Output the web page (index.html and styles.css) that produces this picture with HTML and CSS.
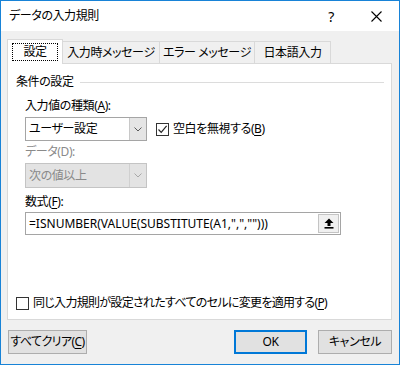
FILE: index.html
```html
<!doctype html>
<html lang="ja">
    <head>
        <meta charset="UTF-8" />
        <title>データの入力規則</title>
        <link rel="stylesheet" href="styles.css">
    </head>
    <body>
        <div class="dialog">
            <div class="titlebar">
                <span class="title">データの入力規則</span>
                <span class="help">?</span>
                <span class="close">
                    <svg width="11" height="11" viewBox="0 0 11 11">
                        <path d="M0.5 0.5 L10.5 10.5 M10.5 0.5 L0.5 10.5" stroke="#000" stroke-width="1.1" fill="none" />
                    </svg>
                </span>
            </div>

            <div class="content">
                <div class="tabs">
                    <div class="tab active"><span class="focus">設定</span></div>
                    <div class="tab tab-2">入力時メッセージ</div>
                    <div class="tab tab-3">エラー メッセージ</div>
                    <div class="tab tab-4">日本語入力</div>
                </div>

                <div class="panel">
                    <div class="group-head">
                        <span>条件の設定</span>
                        <span class="rule"></span>
                    </div>

                    <div class="fields">
                        <div class="label first">入力値の種類(<u>A</u>):</div>
                        <div class="row">
                            <div class="combo">
                                <span class="combo-text">ユーザー設定</span>
                                <span class="drop">
                                    <svg width="8" height="5" viewBox="0 0 8 5">
                                        <path d="M0.5 0.5 L4 4 L7.5 0.5" stroke="#5a5a5a" fill="none" />
                                    </svg>
                                </span>
                            </div>
                            <div class="check">
                                <span class="box">
                                    <svg width="11" height="11" viewBox="0 0 11 11">
                                        <path d="M1.5 5.5 L4.2 8.3 L9.6 1.8" stroke="#222" stroke-width="1.2" fill="none" />
                                    </svg>
                                </span>
                                <span>空白を無視する(<u>B</u>)</span>
                            </div>
                        </div>

                        <div class="label disabled">データ(D):</div>
                        <div class="combo combo-off">
                            <span class="combo-text">次の値以上</span>
                            <span class="drop">
                                <svg width="8" height="5" viewBox="0 0 8 5">
                                    <path d="M0.5 0.5 L4 4 L7.5 0.5" stroke="#a8a8a8" fill="none" />
                                </svg>
                            </span>
                        </div>

                        <div class="label formula-label">数式(<u>F</u>):</div>
                        <div class="formula">
                            <span class="formula-text">=ISNUMBER(VALUE(SUBSTITUTE(A1,",","")))</span>
                            <span class="ref-btn">
                                <svg width="10" height="11" viewBox="0 0 10 11">
                                    <path d="M5 0.5 L9.5 5 L6.5 5 L6.5 8 L3.5 8 L3.5 5 L0.5 5 Z" fill="#000" />
                                    <rect x="0.5" y="9" width="9" height="1.6" fill="#000" />
                                </svg>
                            </span>
                        </div>
                    </div>

                    <div class="check apply">
                        <span class="box"></span>
                        <span>同じ入力規則が設定されたすべてのセルに変更を適用する(<u>P</u>)</span>
                    </div>
                </div>

                <div class="buttons">
                    <div class="btn clear">すべてクリア(<u>C</u>)</div>
                    <div class="btn ok">OK</div>
                    <div class="btn cancel">キャンセル</div>
                </div>
            </div>
        </div>
    </body>
</html>
```

FILE: styles.css
```css
body {
    margin: 0;
    font-family: "Noto Sans", "Noto Sans CJK JP", sans-serif;
    font-size: 12px;
    font-feature-settings: "palt";
    letter-spacing: -0.4px;
    color: #000;
    background-color: #fff;
}

u {
    text-decoration-thickness: 1px;
    text-underline-offset: 2px;
}

.dialog {
    width: 400px;
    height: 365px;
    box-sizing: border-box;
    border: 1px solid #1883d7;
    display: flex;
    flex-direction: column;
}

.titlebar {
    height: 30px;
    flex: none;
    display: flex;
    align-items: center;
    background-color: #fff;
    padding-left: 8px;
}

.title {
    flex: 1;
    line-height: 16px;
}

.help {
    width: 20px;
    text-align: center;
    font-size: 14px;
    margin-right: 30px;
}

.close {
    width: 11px;
    height: 11px;
    margin-right: 17px;
    display: flex;
}

.content {
    flex: 1;
    background-color: #f0f0f0;
    padding: 8px 7px 0 6px;
    display: flex;
    flex-direction: column;
}

/* tabs */

.tabs {
    display: flex;
    align-items: flex-end;
    height: 24px;
    position: relative;
    z-index: 1;
}

.tab {
    height: 22px;
    box-sizing: border-box;
    border: 1px solid #d9d9d9;
    border-bottom: none;
    background-color: #f0f0f0;
    display: flex;
    align-items: center;
    justify-content: center;
    line-height: 16px;
    white-space: nowrap;
    margin-left: -1px;
}

.tab.active {
    height: 25px;
    width: 56px;
    margin-left: 0;
    margin-bottom: -1px;
    background-color: #fff;
    align-items: flex-start;
    padding-top: 3px;
}

.focus {
    border: 1px dotted #000;
    width: 46px;
    height: 18px;
    box-sizing: border-box;
    display: flex;
    align-items: center;
    justify-content: center;
}

.tab-2 {
    width: 98px;
}

.tab-3 {
    width: 96px;
}

.tab-4 {
    width: 77px;
}

/* panel */

.panel {
    height: 257px;
    box-sizing: border-box;
    border: 1px solid #d9d9d9;
    background-color: #fff;
    display: flex;
    flex-direction: column;
    padding: 0 7px 0 8px;
}

.group-head {
    display: flex;
    align-items: center;
    line-height: 16px;
    margin-top: 10px;
}

.rule {
    flex: 1;
    height: 1px;
    background-color: #dcdcdc;
    margin-left: 6px;
}

.fields {
    padding-left: 9px;
}

.label {
    line-height: 16px;
    margin-top: 3px;
}

.label.first {
    margin-top: 8px;
}

.label.disabled {
    color: #8a8a8a;
}

.label.formula-label {
    margin-top: 6px;
}

.row {
    display: flex;
    align-items: center;
    margin-top: 3px;
}

.combo {
    width: 122px;
    height: 24px;
    box-sizing: border-box;
    border: 1px solid #a5a5a5;
    background-color: #fff;
    display: flex;
    align-items: stretch;
    margin-top: 3px;
}

.row .combo {
    margin-top: 0;
}

.combo-text {
    flex: 1;
    display: flex;
    align-items: center;
    padding-left: 3px;
    line-height: 16px;
}

.drop {
    width: 17px;
    box-sizing: border-box;
    border-left: 1px solid #c8c8c8;
    background-color: #e5e5e5;
    display: flex;
    align-items: center;
    justify-content: center;
}

.combo-off {
    height: 25px;
    border-color: #c4c4c4;
    background-color: #e3e3e3;
    color: #8a8a8a;
}

.combo-off .drop {
    background-color: #e3e3e3;
    border-left-color: #d0d0d0;
}

.check {
    display: flex;
    align-items: center;
    line-height: 16px;
    white-space: nowrap;
}

.row .check {
    margin-left: 9px;
}

.box {
    width: 13px;
    height: 13px;
    box-sizing: border-box;
    border: 1px solid #333;
    background-color: #fff;
    display: flex;
    align-items: center;
    justify-content: center;
    margin-right: 4px;
}

.formula {
    width: 316px;
    height: 23px;
    box-sizing: border-box;
    border: 1px solid #a5a5a5;
    background-color: #fff;
    display: flex;
    align-items: center;
    margin-top: 2px;
    padding-right: 1px;
}

.formula-text {
    flex: 1;
    padding-left: 3px;
    line-height: 16px;
    letter-spacing: 0;
    white-space: nowrap;
    overflow: hidden;
}

.ref-btn {
    width: 21px;
    height: 19px;
    box-sizing: border-box;
    border: 1px solid #c4c4c4;
    background-color: #f0f0f0;
    display: flex;
    align-items: center;
    justify-content: center;
}

.apply {
    margin-top: auto;
    margin-bottom: 8px;
    letter-spacing: -0.7px;
}

/* buttons */

.buttons {
    display: flex;
    margin-top: 10px;
}

.btn {
    height: 24px;
    box-sizing: border-box;
    border: 1px solid #adadad;
    background-color: #e1e1e1;
    display: flex;
    align-items: center;
    justify-content: center;
    line-height: 16px;
    white-space: nowrap;
}

.clear {
    width: 79px;
    margin-left: 1px;
    letter-spacing: -0.6px;
}

.ok {
    width: 73px;
    margin-left: auto;
    border: 2px solid #0078d7;
}

.cancel {
    width: 74px;
    margin-left: 11px;
}
```
